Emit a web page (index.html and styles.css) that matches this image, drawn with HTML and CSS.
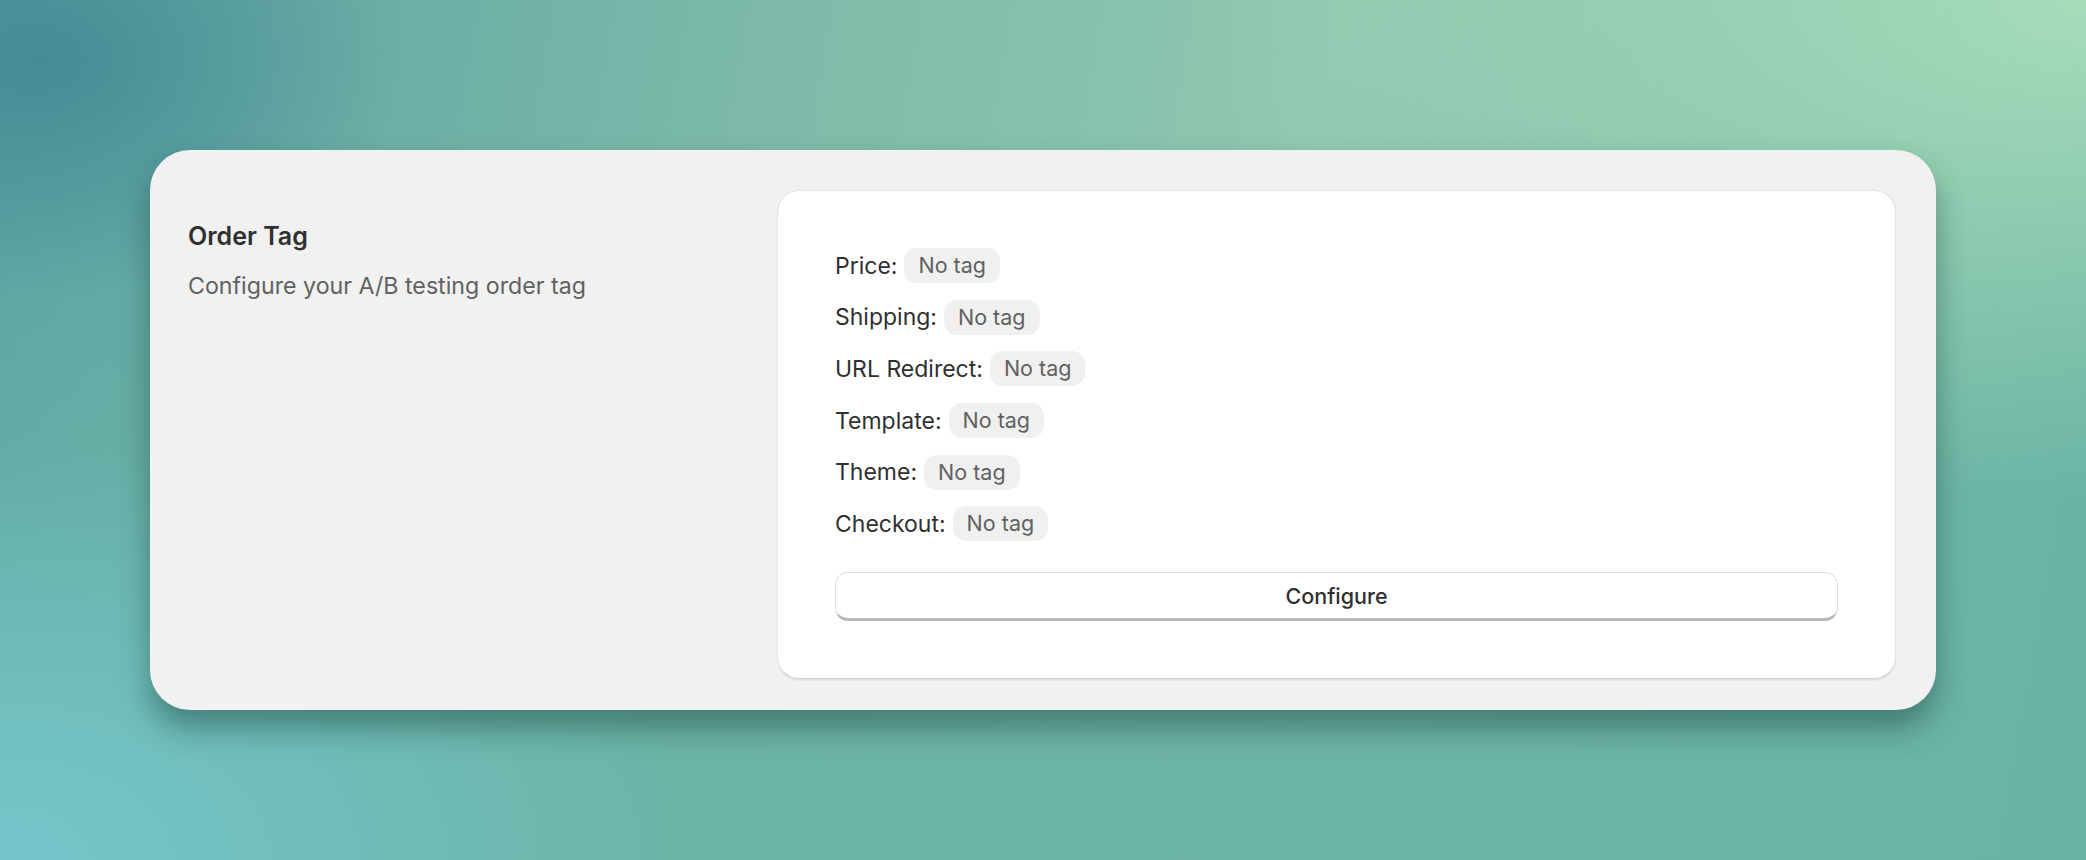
FILE: index.html
```html
<!DOCTYPE html>
<html lang="en">
<head>
    <meta charset="UTF-8">
    <meta name="viewport" content="width=device-width, initial-scale=1.0">
    <title>Order Tag</title>
    <link rel="stylesheet" href="styles.css">
</head>
<body>
    <div class="panel">
        <div class="intro">
            <h2>Order Tag</h2>
            <p>Configure your A/B testing order tag</p>
        </div>

        <div class="card">
            <ul class="tag-list">
                <li><span class="label">Price:</span><span class="badge">No tag</span></li>
                <li><span class="label">Shipping:</span><span class="badge">No tag</span></li>
                <li><span class="label">URL Redirect:</span><span class="badge">No tag</span></li>
                <li><span class="label">Template:</span><span class="badge">No tag</span></li>
                <li><span class="label">Theme:</span><span class="badge">No tag</span></li>
                <li><span class="label">Checkout:</span><span class="badge">No tag</span></li>
            </ul>
            <button type="button">Configure</button>
        </div>
    </div>
</body>
</html>
```

FILE: styles.css
```css
body {
    font-family: 'Inter', 'Liberation Sans', sans-serif;
    margin: 0;
    height: 860px;
    overflow: hidden;
    color: #303030;
    background:
        radial-gradient(ellipse 360px 240px at 40px 60px, rgba(62, 130, 144, 0.75), rgba(62, 130, 144, 0) 100%),
        radial-gradient(ellipse 700px 420px at 0px 860px, rgba(118, 200, 208, 0.9), rgba(118, 200, 208, 0) 100%),
        radial-gradient(ellipse 900px 500px at 2086px 0px, rgba(170, 222, 186, 0.95), rgba(170, 222, 186, 0) 100%),
        linear-gradient(to bottom, rgba(106, 179, 166, 0) 20%, rgba(106, 179, 166, 0.9) 85%),
        linear-gradient(100deg, #5aa3a3 0%, #7dbaa9 35%, #8fc8b0 60%, #66b2a3 100%);
}
.panel {
    box-sizing: border-box;
    width: 1786px;
    height: 560px;
    margin: 150px 0 0 150px;
    padding: 40px 40px 31px 38px;
    display: flex;
    gap: 40px;
    background-color: #f1f1f1;
    border-radius: 40px;
    box-shadow: 0px 18px 30px rgba(20, 60, 50, 0.45);
}
.intro {
    width: 549px;
    padding-top: 30px;
}
.intro h2 {
    margin: 0;
    font-size: 25px;
    line-height: 32px;
    font-weight: 600;
    color: #303030;
}
.intro p {
    margin: 19px 0 0;
    font-size: 23.2px;
    line-height: 30px;
    color: #616161;
}
.card {
    box-sizing: border-box;
    flex: 1;
    height: 489px;
    padding: 57px 57px 0;
    background-color: #ffffff;
    border: 1px solid #e3e3e3;
    border-bottom-color: #d0d0d0;
    border-radius: 22px;
    box-shadow: 0px 2px 1px rgba(0, 0, 0, 0.06);
}
.tag-list {
    list-style: none;
    margin: 0;
    padding: 0;
    display: flex;
    flex-direction: column;
    gap: 16.7px;
}
.tag-list li {
    display: flex;
    align-items: center;
    gap: 7px;
    height: 35px;
}
.label {
    font-size: 23px;
}
.badge {
    font-size: 21.5px;
    line-height: 35px;
    padding: 0 14px;
    border-radius: 13px;
    background-color: #f0f0f0;
    color: #616161;
}
button {
    display: block;
    width: 100%;
    height: 49px;
    margin-top: 31px;
    font-family: inherit;
    font-size: 21.5px;
    font-weight: 500;
    color: #303030;
    background-color: #ffffff;
    border: 1px solid #e0e0e0;
    border-bottom: 3px solid #b8b8b8;
    border-radius: 13px;
    cursor: pointer;
}
button:hover {
    background-color: #f7f7f7;
}
```
